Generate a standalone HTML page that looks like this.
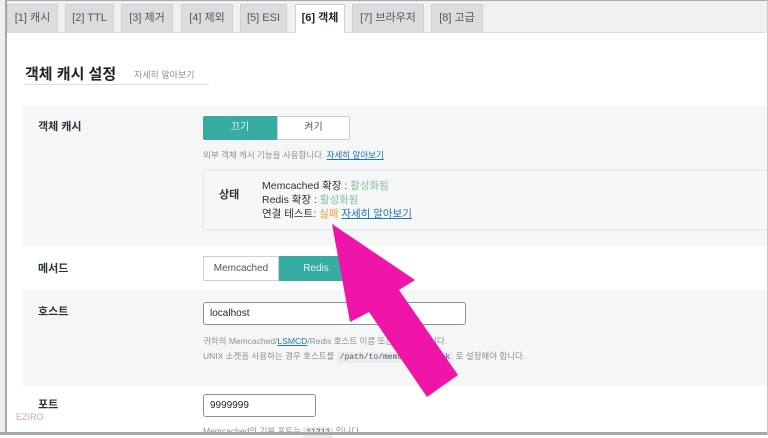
<!DOCTYPE html>
<html><head><meta charset="utf-8"><style>
*{margin:0;padding:0;box-sizing:border-box}
body{width:768px;height:435px;overflow:hidden;background:#fff;font-family:"Liberation Sans","Noto Sans CJK KR",sans-serif;position:relative;color:#1d2327}
.a{position:absolute}
.tab{position:absolute;top:4px;height:28px;background:#dcdcde;border:1px solid #d0d0d2;border-bottom:none;font-size:11px;color:#50575e;line-height:27px;text-align:center}
.tab.on{background:#fff;color:#1d2327;font-weight:bold;height:29px}
.lbl{font-size:11px;font-weight:bold;color:#2c3338}
.desc{font-size:8.5px;color:#8c8f94}
a{color:#2271b1;text-decoration:underline}
code{background:#eaeced;font-family:"Liberation Mono",monospace;font-size:8px;padding:1px 3px;color:#50575e}
</style></head><body>
<div class="a" style="left:0;top:0;width:768px;height:32px;background:#f0f0f1;border-top:1px solid #aaa"></div>
<div class="a" style="left:0;top:0;width:7px;height:435px;background:#f0f0f1;border-right:2px solid #a7a7a7"></div>
<div class="a" style="left:7px;top:32px;width:759px;height:1px;background:#dcdcde"></div>
<div class="tab" style="left:7px;width:51px">[1] 캐시</div>
<div class="tab" style="left:65px;width:49px">[2] TTL</div>
<div class="tab" style="left:121px;width:52px">[3] 제거</div>
<div class="tab" style="left:181px;width:52px">[4] 제외</div>
<div class="tab" style="left:240px;width:47px">[5] ESI</div>
<div class="tab on" style="left:295px;width:50px">[6] 객체</div>
<div class="tab" style="left:352px;width:72px">[7] 브라우저</div>
<div class="tab" style="left:431px;width:52px">[8] 고급</div>

<div class="a" style="left:25px;top:63px;font-size:15px;font-weight:bold">객체 캐시 설정</div>
<div class="a" style="left:134px;top:68px;font-size:9px;color:#8c8f94">자세히 알아보기</div>
<div class="a" style="left:24px;top:84px;width:185px;height:1px;background:#dcdcde"></div>

<div class="a" style="left:23px;top:106px;width:745px;height:140px;background:#f5f6f6"></div>
<div class="a lbl" style="left:38px;top:118px">객체 캐시</div>
<div class="a" style="left:203px;top:116px;width:74px;height:24px;background:#36aca2;color:#e6f5f3;font-size:10px;line-height:24px;text-align:center;border-radius:2px 0 0 2px">끄기</div>
<div class="a" style="left:277px;top:116px;width:73px;height:24px;background:#fff;border:1px solid #d0d0d2;font-size:10px;line-height:22px;text-align:center;color:#50575e">켜기</div>
<div class="a desc" style="left:203px;top:149px">외부 객체 캐시 기능을 사용합니다. <a>자세히 알아보기</a></div>
<div class="a" style="left:203px;top:170px;width:570px;height:60px;background:#f6f7f7;border:1px solid #e2e4e5;border-radius:3px"></div>
<div class="a lbl" style="left:219px;top:186px">상태</div>
<div class="a" style="left:262px;top:179px;font-size:10.5px;line-height:14px;color:#2c3338">Memcached 확장 : <span style="color:#8bbd9c">활성화됨</span><br>Redis 확장 : <span style="color:#8bbd9c">활성화됨</span><br>연결 테스트: <span style="color:#e8a23a">실패</span> <a>자세히 알아보기</a></div>

<div class="a lbl" style="left:38px;top:260px">메서드</div>
<div class="a" style="left:203px;top:256px;width:76px;height:25px;background:#fff;border:1px solid #d0d0d2;font-size:10px;line-height:23px;text-align:center;color:#50575e">Memcached</div>
<div class="a" style="left:279px;top:256px;width:74px;height:25px;background:#36aca2;color:#e6f5f3;font-size:10px;line-height:25px;text-align:center">Redis</div>

<div class="a" style="left:23px;top:290px;width:745px;height:96px;background:#f5f6f6"></div>
<div class="a lbl" style="left:38px;top:303px">호스트</div>
<div class="a" style="left:203px;top:302px;width:263px;height:23px;background:#fff;border:1px solid #8c8f94;border-radius:3px;font-size:10px;line-height:21px;padding-left:6px">localhost</div>
<div class="a desc" style="left:203px;top:335px">귀하의 Memcached/<a>LSMCD</a>/Redis 호스트 이름 또는 IP 주소입니다.</div>
<div class="a desc" style="left:203px;top:350px">UNIX 소켓을 사용하는 경우 호스트를 <code>/path/to/memcached.sock</code> 로 설정해야 합니다.</div>

<div class="a lbl" style="left:38px;top:396px">포트</div>
<div class="a" style="left:203px;top:394px;width:113px;height:23px;background:#fff;border:1px solid #8c8f94;border-radius:3px;font-size:10px;line-height:21px;padding-left:6px">9999999</div>
<div class="a desc" style="left:203px;top:425px">Memcached의 기본 포트는 <code>11211</code> 입니다.</div>
<div class="a" style="left:16px;top:412px;font-size:9px;color:#c9a9b0">EZIRO</div>
<div class="a" style="left:0;top:432px;width:768px;height:3px;background:#a7a7a7"></div>
<div class="a" style="left:767px;top:0;width:1px;height:435px;background:#c8c8c8"></div>

<svg class="a" style="left:0;top:0" width="768" height="435">
<polygon points="332,224 415,280 399,290 458,375 427,397 369,312 350,322" fill="#ee15a8"/>
</svg>
</body></html>
